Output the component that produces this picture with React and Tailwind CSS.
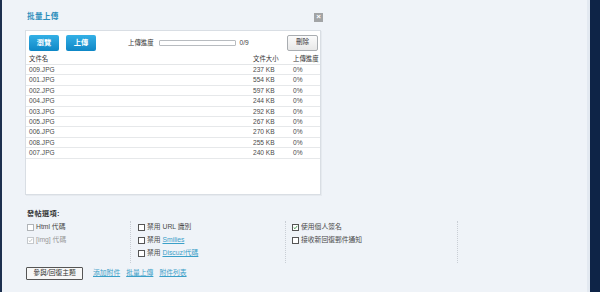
import React from "react";

const F = { fontFamily: '"Liberation Sans", "Noto Sans CJK TC", sans-serif' };

function Box({ checked, disabled, light }) {
  const border = disabled ? "border-[#c4c8cc]" : light ? "border-[#b0b4b8]" : "border-[#555]";
  return (
    <span className={`relative inline-block w-[7px] h-[7px] border ${border} bg-white shrink-0`}>
      {checked && (
        <svg viewBox="0 0 7 7" className="absolute left-0 top-0 w-[5px] h-[5px]">
          <path d="M1 3.5 L2.8 5.2 L6 1.2" fill="none" stroke={disabled ? "#b8bcc0" : "#2f8a3a"} strokeWidth="1.2" />
        </svg>
      )}
    </span>
  );
}

function Opt({ children, checked, disabled, light }) {
  return (
    <div className="h-[13px] flex items-center gap-[2px]">
      <Box checked={checked} disabled={disabled} light={light} />
      <span className={`text-[6.8px] leading-none ${disabled ? "text-[#999]" : "text-[#4a4a4a]"}`}>{children}</span>
    </div>
  );
}

const rows = [
  ["009.JPG", "237 KB"],
  ["001.JPG", "554 KB"],
  ["002.JPG", "597 KB"],
  ["004.JPG", "244 KB"],
  ["003.JPG", "292 KB"],
  ["005.JPG", "267 KB"],
  ["006.JPG", "270 KB"],
  ["008.JPG", "255 KB"],
  ["007.JPG", "240 KB"],
];

export default function App() {
  return (
    <div className="flex w-[600px] h-[292px] bg-[#eff3f8] overflow-hidden" style={F}>
      <div className="w-[2px] bg-[#1c2f4e]" />
      <div className="flex-1 pl-[23px] pt-[12px]">
        <div className="w-[298px]">
          <div className="flex items-center justify-between h-[10px] pl-[2px]">
            <span className="text-[7.6px] font-bold text-[#2a8dbb] tracking-[0.3px]">批量上傳</span>
            <span className="w-[9px] h-[9px] bg-[#a2a4a6] text-white text-[8px] leading-none flex items-center justify-center font-bold">×</span>
          </div>
          <div className="mt-[8px] w-[296px] h-[165px] bg-white border border-[#d9dee4] shadow-[1px_1px_0_#e6eaef]">
            <div className="flex items-center pl-[3px] pr-[2px] pt-[3px] h-[20px]">
              <button className="w-[30px] h-[16px] rounded-[2px] bg-gradient-to-b from-[#33b0e6] to-[#0d87c6] text-white text-[7.2px] font-bold leading-none">瀏覽</button>
              <button className="ml-[7px] w-[30px] h-[16px] rounded-[2px] bg-gradient-to-b from-[#33b0e6] to-[#0d87c6] text-white text-[7.2px] font-bold leading-none">上傳</button>
              <span className="ml-[32px] text-[6.4px] text-[#333]">上傳進度</span>
              <span className="ml-[5px] w-[77px] h-[6px] border border-[#b8bcc0] bg-white rounded-[1px]" />
              <span className="ml-[4px] text-[6.6px] text-[#444]">0/9</span>
              <button className="ml-auto w-[31px] h-[16px] rounded-[2px] border border-[#a9adb1] bg-gradient-to-b from-[#fbfbfb] to-[#e8e8e8] text-[6.6px] text-[#333] leading-none">刪除</button>
            </div>
            <div className="mt-[3px] grid grid-cols-[1fr_40px_27px] h-[11px] items-center border-b border-[#e4e6e8] pl-[3px] text-[6.4px] text-[#333]">
              <span>文件名</span>
              <span>文件大小</span>
              <span>上傳進度</span>
            </div>
            {rows.map(([n, s]) => (
              <div key={n} className="grid grid-cols-[1fr_40px_27px] h-[10.4px] items-center border-b border-[#e6e8ea] pl-[3px] text-[6.6px] text-[#4a4a4a]">
                <span>{n}</span>
                <span>{s}</span>
                <span>0%</span>
              </div>
            ))}
          </div>
        </div>

        <div className="mt-[14px] h-[10px] flex items-center pl-[2px] text-[7.2px] font-bold text-[#333] tracking-[0.3px]">發帖選項:</div>
        <div className="mt-[2px] flex">
          <div className="w-[105px] pt-0 pb-[3px] pl-[2px]">
            <Opt light>Html 代碼</Opt>
            <Opt checked disabled>[img] 代碼</Opt>
          </div>
          <div className="w-[155px] border-l border-dotted border-[#c9ced5] pl-[7px] pb-[3px]">
            <Opt>禁用 URL 識別</Opt>
            <Opt>禁用 <span className="text-[#3ba0c8] underline">Smilies</span></Opt>
            <Opt>禁用 <span className="text-[#3ba0c8] underline">Discuz!代碼</span></Opt>
          </div>
          <div className="w-[173px] border-l border-r border-dotted border-[#c9ced5] pl-[6px] pb-[3px]">
            <Opt checked>使用個人簽名</Opt>
            <Opt>接收新回復郵件通知</Opt>
          </div>
        </div>
        <div className="mt-[4px] flex items-center pl-[1px] gap-[10px]">
          <button className="w-[57px] h-[13px] border border-[#555] rounded-[1px] bg-[#f7f7f7] text-[6.8px] text-[#333] leading-none">參與/回復主題</button>
          <div className="flex items-center gap-[6px] text-[6.8px] text-[#3ba0c8]">
            <span className="underline">添加附件</span>
            <span className="underline">批量上傳</span>
            <span className="underline">附件列表</span>
          </div>
        </div>
      </div>
      <div className="w-[3px] bg-[#e3e9f1]" />
      <div className="w-[10px] bg-[#0e2447]" />
    </div>
  );
}
